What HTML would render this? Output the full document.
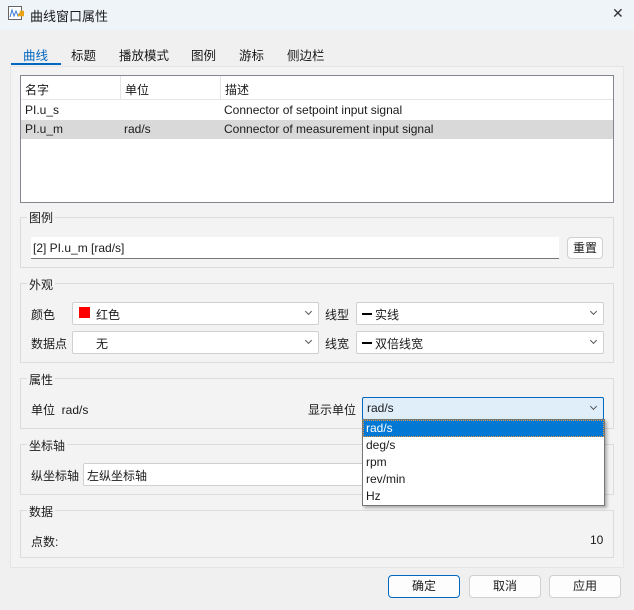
<!DOCTYPE html>
<html><head><meta charset="utf-8"><style>
*{box-sizing:border-box;margin:0;padding:0}
body{width:634px;height:610px;background:#f0f0f0;font-family:"Liberation Sans","Noto Sans CJK SC",sans-serif;font-size:12px;color:#1a1a1a;position:relative;overflow:hidden}
.a{position:absolute;white-space:nowrap}
.grp{position:absolute;border:1px solid #dcdcdc;left:20px;width:594px}
.lbl{position:absolute;background:#f3f3f3;padding:0 2px;left:27px}
.combo{position:absolute;background:#fff;border:1px solid #d0d0d0;border-radius:2px;height:23px}
.chev{position:absolute;right:7px;top:6px;width:5px;height:5px;border-right:1px solid #555;border-bottom:1px solid #555;transform:rotate(45deg)}
.btn{position:absolute;background:#fdfdfd;border:1px solid #d0d0d0;border-radius:4px;text-align:center;line-height:21px}
</style></head><body>
<div class="a" style="left:0;top:0;width:634px;height:30px;background:#eff4f9"></div>
<svg class="a" style="left:8px;top:6px" width="16" height="16"><rect x="0.5" y="0.5" width="13" height="13" fill="#fff" stroke="#666"/><path d="M2 11 L4 4 L6 10 L8 5 L10 10 L12 7" fill="none" stroke="#3a7bd5"/><path d="M10 9h3v-3h2v3h3" stroke="#e8a317" stroke-width="2.5" fill="none"/></svg>
<div class="a" style="left:30px;top:6px;font-size:13px">曲线窗口属性</div>
<div class="a" style="left:612px;top:5px;font-size:14px;color:#333">✕</div>
<div class="a" style="left:10px;top:66px;width:614px;height:502px;background:#f3f3f3;border:1px solid #e5e5e5"></div>
<div class="a" style="left:23px;top:45px;font-size:12.5px;color:#0067c0">曲线</div>
<div class="a" style="left:11px;top:63px;width:50px;height:2px;background:#0067c0"></div>
<div class="a" style="left:71px;top:45px;font-size:12.5px">标题</div>
<div class="a" style="left:119px;top:45px;font-size:12.5px">播放模式</div>
<div class="a" style="left:191px;top:45px;font-size:12.5px">图例</div>
<div class="a" style="left:239px;top:45px;font-size:12.5px">游标</div>
<div class="a" style="left:287px;top:45px;font-size:12.5px">侧边栏</div>
<div class="a" style="left:20px;top:75px;width:594px;height:128px;background:#fff;border:1px solid #828790"></div>
<div class="a" style="left:21px;top:76px;width:592px;height:24px;border-bottom:1px solid #e5e5e5"></div>
<div class="a" style="left:120px;top:76px;width:1px;height:24px;background:#e5e5e5"></div>
<div class="a" style="left:220px;top:76px;width:1px;height:24px;background:#e5e5e5"></div>
<div class="a" style="left:25px;top:81px">名字</div><div class="a" style="left:125px;top:81px">单位</div><div class="a" style="left:225px;top:81px">描述</div>
<div class="a" style="left:25px;top:103px">PI.u_s</div><div class="a" style="left:224px;top:103px">Connector of setpoint input signal</div>
<div class="a" style="left:21px;top:120px;width:592px;height:19px;background:#d9d9d9"></div>
<div class="a" style="left:25px;top:122px">PI.u_m</div><div class="a" style="left:124px;top:122px">rad/s</div><div class="a" style="left:224px;top:122px">Connector of measurement input signal</div>

<div class="grp" style="top:217px;height:51px"></div><div class="a lbl" style="top:209px">图例</div>
<div class="a" style="left:31px;top:237px;width:528px;height:22px;background:#fff;border-bottom:1px solid #777"></div>
<div class="a" style="left:33px;top:241px">[2] PI.u_m [rad/s]</div>
<div class="btn" style="left:567px;top:237px;width:36px;height:22px">重置</div>

<div class="grp" style="top:283px;height:80px"></div><div class="a lbl" style="top:276px">外观</div>
<div class="a" style="left:31px;top:306px">颜色</div>
<div class="combo" style="left:72px;top:302px;width:247px"><div class="a" style="left:6px;top:4px;width:11px;height:11px;background:#f00"></div><div class="a" style="left:23px;top:3px">红色</div><div class="chev"></div></div>
<div class="a" style="left:325px;top:306px">线型</div>
<div class="combo" style="left:356px;top:302px;width:248px"><div class="a" style="left:5px;top:10px;width:10px;height:2px;background:#000"></div><div class="a" style="left:18px;top:3px">实线</div><div class="chev"></div></div>
<div class="a" style="left:31px;top:335px">数据点</div>
<div class="combo" style="left:72px;top:331px;width:247px"><div class="a" style="left:23px;top:3px">无</div><div class="chev"></div></div>
<div class="a" style="left:325px;top:335px">线宽</div>
<div class="combo" style="left:356px;top:331px;width:248px"><div class="a" style="left:5px;top:10px;width:10px;height:2px;background:#000"></div><div class="a" style="left:18px;top:3px">双倍线宽</div><div class="chev"></div></div>

<div class="grp" style="top:378px;height:51px"></div><div class="a lbl" style="top:371px">属性</div>
<div class="a" style="left:31px;top:401px">单位&nbsp; rad/s</div>
<div class="a" style="left:308px;top:401px">显示单位</div>
<div class="combo" style="left:362px;top:397px;width:242px;background:#e0eef9;border-color:#0067c0"><div class="a" style="left:4px;top:3px">rad/s</div><div class="chev"></div></div>

<div class="grp" style="top:444px;height:51px"></div><div class="a lbl" style="top:437px">坐标轴</div>
<div class="a" style="left:31px;top:467px">纵坐标轴</div>
<div class="combo" style="left:83px;top:463px;width:290px"><div class="a" style="left:3px;top:3px">左纵坐标轴</div></div>

<div class="grp" style="top:510px;height:48px"></div><div class="a lbl" style="top:503px">数据</div>
<div class="a" style="left:31px;top:533px">点数:</div><div class="a" style="left:590px;top:533px">10</div>

<div class="a" style="left:362px;top:419px;width:243px;height:87px;background:#fff;border:1px solid #777;box-shadow:2px 2px 3px rgba(0,0,0,.3)"></div>
<div class="a" style="left:363px;top:420px;width:241px;height:17px;background:#0078d4;border:1px dotted #e89a3c"></div>
<div class="a" style="left:366px;top:421px;color:#fff">rad/s</div>
<div class="a" style="left:366px;top:438px">deg/s</div>
<div class="a" style="left:366px;top:455px">rpm</div>
<div class="a" style="left:366px;top:472px">rev/min</div>
<div class="a" style="left:366px;top:489px">Hz</div>

<div class="btn" style="left:388px;top:575px;width:72px;height:23px;border-color:#0067c0">确定</div>
<div class="btn" style="left:469px;top:575px;width:72px;height:23px">取消</div>
<div class="btn" style="left:549px;top:575px;width:72px;height:23px">应用</div>
</body></html>
